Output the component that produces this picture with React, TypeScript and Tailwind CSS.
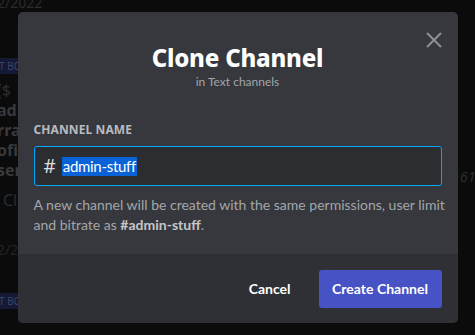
import React from 'react';

const noto = { fontFamily: '"Noto Sans", "Open Sans", sans-serif' };
const lato = { fontFamily: 'Lato, "Noto Sans", sans-serif' };

// faint chat behind the dimmed backdrop
const Backdrop = () => (
  <div className="absolute inset-0 bg-[#0b0b0c] overflow-hidden" style={noto}>
    <div className="flex flex-col items-start -ml-[3px]">
      <span className="text-[14px] leading-[14px] -mt-[4px] text-[#2a2b2e]">2/2022</span>
      <span className="mt-[48px] h-[16px] bg-[#141a36] text-[10px] leading-[16px] text-[#3a4368] px-[2px]">T BOT</span>
      <span className="mt-[6px] text-[16px] leading-[20px] text-[#2d2e32]">($</span>
      <span className="text-[16px] leading-[20px] font-bold text-[#38393d]">ad</span>
      <span className="text-[16px] leading-[20px] font-bold text-[#38393d]">rra</span>
      <span className="text-[16px] leading-[20px] font-bold text-[#38393d]">ofil</span>
      <span className="text-[16px] leading-[20px] font-bold text-[#38393d]">ser</span>
      <span className="mt-[10px] ml-[6px] text-[16px] leading-[20px] text-[#2a2b2e]">Cl</span>
      <span className="mt-[30px] text-[14px] leading-[20px] text-[#222326]">2/2</span>
      <span className="mt-[33px] h-[16px] bg-[#141a36] text-[10px] leading-[16px] text-[#3a4368] px-[2px]">T BOT</span>
    </div>
    <span className="absolute left-[460px] top-[166px] text-[14px] italic text-[#2c2d30]">61</span>
  </div>
);

export default function App() {
  return (
    <div className="relative w-[475px] h-[335px] overflow-hidden" style={lato}>
      <Backdrop />
      <div className="absolute inset-0 flex items-center justify-center">
        <div className="w-[440px] h-[311px] rounded-[5px] bg-[#36383d] flex flex-col overflow-hidden">
          <div className="relative flex-1 px-4 pt-[32px]">
            <button type="button" className="absolute right-[16px] top-[20px] text-[#8e9096]">
              <svg width="16" height="16" viewBox="0 0 16 16" fill="none" stroke="currentColor" strokeWidth="2">
                <path d="M1 1 L15 15 M15 1 L1 15" />
              </svg>
            </button>
            <h1 className="text-center text-[24px] leading-[28px] font-extrabold text-white tracking-[-0.2px]" style={noto}>
              Clone Channel
            </h1>
            <p className="text-center text-[12px] leading-[16px] text-[#a3a6aa] mt-[2px]">in Text channels</p>
            <div className="mt-[32px] text-[12px] leading-[16px] font-bold uppercase text-[#b9bbbe] tracking-[0.1px]" style={noto}>
              Channel Name
            </div>
            <div className="mt-[8px] h-[40px] border border-[#00a8fc] rounded-[3px] bg-[#2b2d31] flex items-center px-[9px]">
              <span className="text-[19px] leading-none text-[#dcddde] mr-[6px]" style={noto}>#</span>
              <span className="text-[15px] leading-[19px] tracking-[-0.3px] text-white bg-[#0a63d6] px-[1px]">admin-stuff</span>
            </div>
            <p className="mt-[9px] text-[14px] leading-[20px] text-[#a3a6aa] whitespace-nowrap">
              A new channel will be created with the same permissions, user limit
              <br />
              and bitrate as <span className="font-bold text-[#c4c6c9]">#admin-stuff</span>.
            </p>
          </div>
          <div className="h-[69px] bg-[#2e3035] flex items-center justify-end gap-[28px] px-4">
            <button type="button" className="text-[14px] font-bold text-white">Cancel</button>
            <button type="button" className="h-[38px] w-[123px] rounded-[3px] bg-[#4752c4] text-[14px] font-bold text-white">
              Create Channel
            </button>
          </div>
        </div>
      </div>
    </div>
  );
}
